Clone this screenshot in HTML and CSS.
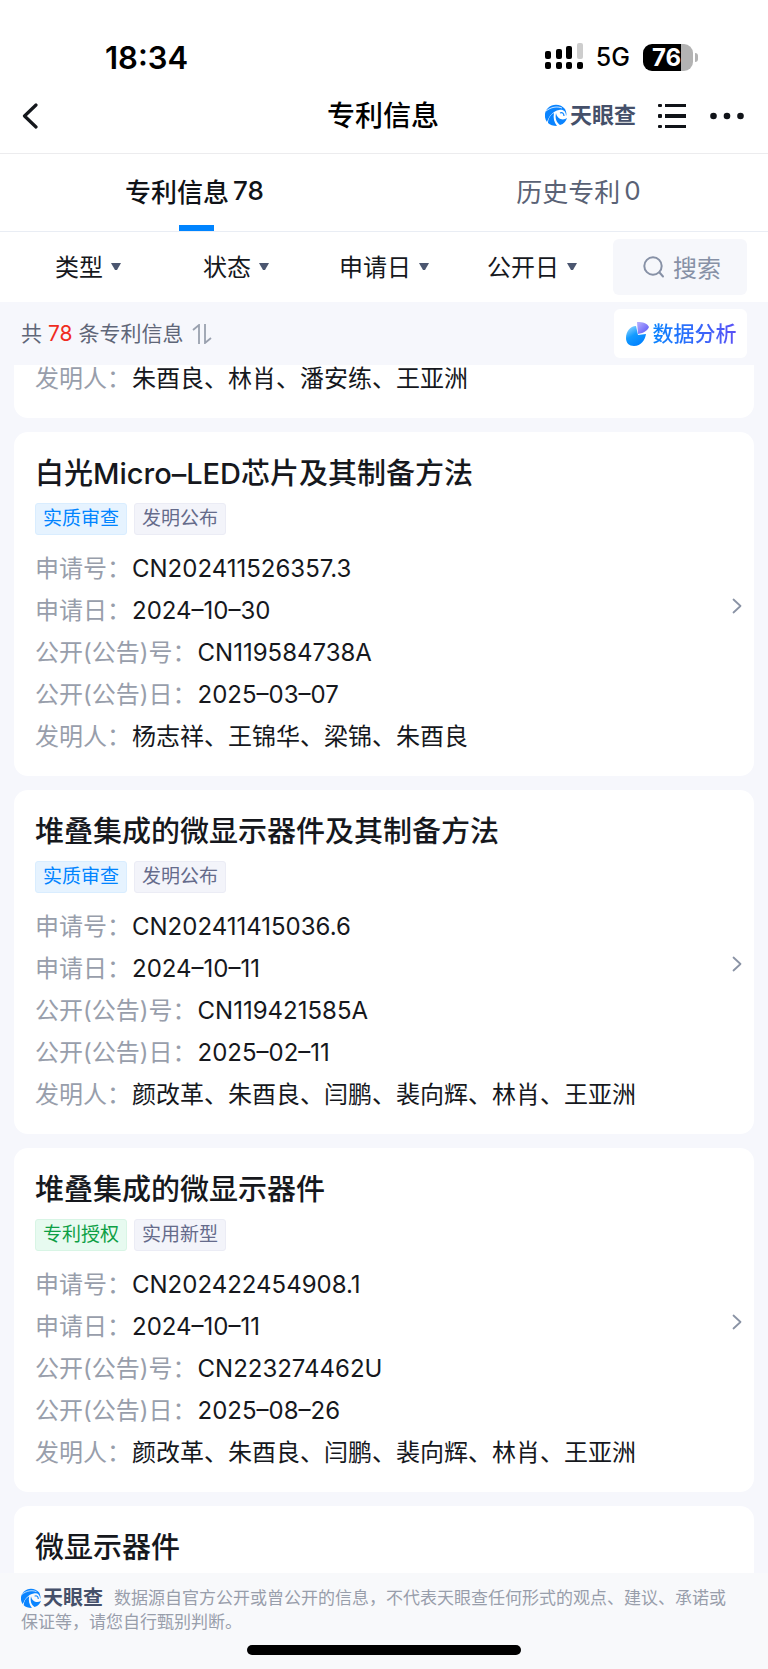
FILE: index.html
```html
<!DOCTYPE html>
<html lang="zh-CN">
<head>
    <meta charset="UTF-8">
    <meta name="viewport" content="width=device-width, initial-scale=1.0">
    <title>专利信息</title>
    <link rel="stylesheet" href="styles.css">
</head>
<body>
    <!-- shared icons -->
    <svg class="sprite" aria-hidden="true">
        <symbol id="swirl" viewBox="0 0 22 22">
            <path d="M20 5C16 0 8-1 3 4c-4 4-4 10-1 14C4 12 8 7 14 6c4-1 7 1 7 6 1-2 0-5-1-7z" fill="#0a84ff"/>
            <path d="M1 7C6 3 12 2 17 4" fill="none" stroke="#fff" stroke-width="0.8"/>
            <path d="M9 9c-4 2-6 6-6 10 2 2 5 3 9 3-3-4-4-8-3-13z" fill="#0a84ff"/>
            <path d="M11 9c-1 5 0 9 4 12 4-1 6-4 7-7-4 3-10 1-11-5z" fill="#0a84ff"/>
            <path d="M15 9c2-1 4 0 4 3" fill="none" stroke="#0a84ff" stroke-width="1.2"/>
        </symbol>
        <symbol id="chevron" viewBox="0 0 10 16">
            <path d="M1.5 1.5L8.5 8l-7 6.5" fill="none" stroke="#8a93a5" stroke-width="1.8" stroke-linecap="round" stroke-linejoin="round"/>
        </symbol>
    </svg>

    <header>
        <div class="status-bar">
            <span class="time">18:34</span>
            <div class="status-icons">
                <svg class="signal" width="38" height="28" viewBox="0 0 38 28">
                    <rect x="0" y="8" width="6" height="8" rx="2"/>
                    <rect x="11" y="6" width="6" height="10" rx="2"/>
                    <rect x="21" y="3" width="6" height="13" rx="2"/>
                    <rect x="32" y="0" width="6" height="16" rx="2" fill="#cdcdcd"/>
                    <rect x="0" y="19" width="6" height="7" rx="2"/>
                    <rect x="11" y="19" width="6" height="7" rx="2"/>
                    <rect x="21" y="19" width="6" height="7" rx="2"/>
                    <rect x="32" y="19" width="6" height="7" rx="2"/>
                </svg>
                <span class="network">5G</span>
                <span class="battery">76</span>
            </div>
        </div>

        <div class="nav">
            <button class="icon-button back" aria-label="返回">
                <svg width="16" height="26" viewBox="0 0 16 26">
                    <path d="M14 2L2.500 13 14 24" fill="none" stroke="#14171c" stroke-width="3.200" stroke-linecap="round" stroke-linejoin="round"/>
                </svg>
            </button>
            <h1>专利信息</h1>
            <div class="nav-right">
                <a href="#" class="brand"><svg width="22" height="22"><use href="#swirl"/></svg>天眼查</a>
                <button class="icon-button" aria-label="列表">
                    <svg width="28" height="26" viewBox="0 0 28 26" fill="#101318">
                        <rect x="0" y="1" width="4" height="3" rx="1"/>
                        <rect x="7" y="1" width="21" height="3"/>
                        <rect x="0" y="11" width="4" height="4" rx="1"/>
                        <rect x="7" y="11" width="21" height="4"/>
                        <rect x="0" y="22" width="4" height="3" rx="1"/>
                        <rect x="7" y="22" width="21" height="3"/>
                    </svg>
                </button>
                <button class="icon-button" aria-label="更多">
                    <svg width="34" height="8" viewBox="0 0 34 8" fill="#101318">
                        <circle cx="3.500" cy="4" r="3.300"/>
                        <circle cx="17" cy="4" r="3.300"/>
                        <circle cx="30.500" cy="4" r="3.300"/>
                    </svg>
                </button>
            </div>
        </div>

        <nav class="tabs">
            <a href="#" class="tab active">专利信息<span>78</span></a>
            <a href="#" class="tab">历史专利<span>0</span></a>
        </nav>

        <div class="filters">
            <button class="filter">类型<i class="arrow"></i></button>
            <button class="filter">状态<i class="arrow"></i></button>
            <button class="filter">申请日<i class="arrow"></i></button>
            <button class="filter">公开日<i class="arrow"></i></button>
            <button class="search">
                <svg width="22" height="22" viewBox="0 0 22 22" fill="none" stroke="#8791a6" stroke-width="2" stroke-linecap="round">
                    <circle cx="10" cy="10" r="8.700"/>
                    <path d="M16.500 16.500L20 20.500"/>
                </svg>
                <span>搜索</span>
            </button>
        </div>
    </header>

    <div class="summary">
        <p>共 <b>78</b> 条专利信息</p>
        <button class="icon-button sort" aria-label="排序">
            <svg width="20" height="20" viewBox="0 0 20 20" fill="none" stroke="#9aa1af" stroke-width="1.800">
                <path d="M1 6l6-5v19"/>
                <path d="M13 0v19l6-5"/>
            </svg>
        </button>
        <button class="analysis">
            <svg width="24" height="24" viewBox="0 0 24 24">
                <defs>
                    <linearGradient id="pie" x1="0" y1="0" x2="0.600" y2="1">
                        <stop offset="0" stop-color="#a6e0ff"/>
                        <stop offset="0.500" stop-color="#149bff"/>
                        <stop offset="1" stop-color="#0080ff"/>
                    </linearGradient>
                    <linearGradient id="slice" x1="0" y1="0" x2="1" y2="1">
                        <stop offset="0" stop-color="#b9b2ff"/>
                        <stop offset="1" stop-color="#5550f5"/>
                    </linearGradient>
                </defs>
                <path d="M11 4C5 4 1 10 1 16c0 5 3 8 8 8 7 0 11-6 12-12l-8 1z" fill="url(#pie)"/>
                <path d="M12 0c6 0 10 1 12 5-1 3-5 6-11 7z" fill="url(#slice)"/>
            </svg>
            <span>数据分析</span>
        </button>
    </div>

    <main>
        <article class="card card-scrolled">
            <div class="card-body">
                <dl>
                    <div><dt>发明人：</dt><dd>朱酉良、林肖、潘安练、王亚洲</dd></div>
                </dl>
            </div>
        </article>

        <article class="card">
            <div class="card-body">
                <h2>白光Micro–LED芯片及其制备方法</h2>
                <div class="tags">
                    <span class="tag blue">实质审查</span>
                    <span class="tag">发明公布</span>
                </div>
                <dl>
                    <div><dt>申请号：</dt><dd>CN202411526357.3</dd></div>
                    <div><dt>申请日：</dt><dd>2024–10–30</dd></div>
                    <div><dt>公开(公告)号：</dt><dd>CN119584738A</dd></div>
                    <div><dt>公开(公告)日：</dt><dd>2025–03–07</dd></div>
                    <div><dt>发明人：</dt><dd>杨志祥、王锦华、梁锦、朱酉良</dd></div>
                </dl>
            </div>
            <svg width="10" height="16"><use href="#chevron"/></svg>
        </article>

        <article class="card">
            <div class="card-body">
                <h2>堆叠集成的微显示器件及其制备方法</h2>
                <div class="tags">
                    <span class="tag blue">实质审查</span>
                    <span class="tag">发明公布</span>
                </div>
                <dl>
                    <div><dt>申请号：</dt><dd>CN202411415036.6</dd></div>
                    <div><dt>申请日：</dt><dd>2024–10–11</dd></div>
                    <div><dt>公开(公告)号：</dt><dd>CN119421585A</dd></div>
                    <div><dt>公开(公告)日：</dt><dd>2025–02–11</dd></div>
                    <div><dt>发明人：</dt><dd>颜改革、朱酉良、闫鹏、裴向辉、林肖、王亚洲</dd></div>
                </dl>
            </div>
            <svg width="10" height="16"><use href="#chevron"/></svg>
        </article>

        <article class="card">
            <div class="card-body">
                <h2>堆叠集成的微显示器件</h2>
                <div class="tags">
                    <span class="tag green">专利授权</span>
                    <span class="tag">实用新型</span>
                </div>
                <dl>
                    <div><dt>申请号：</dt><dd>CN202422454908.1</dd></div>
                    <div><dt>申请日：</dt><dd>2024–10–11</dd></div>
                    <div><dt>公开(公告)号：</dt><dd>CN223274462U</dd></div>
                    <div><dt>公开(公告)日：</dt><dd>2025–08–26</dd></div>
                    <div><dt>发明人：</dt><dd>颜改革、朱酉良、闫鹏、裴向辉、林肖、王亚洲</dd></div>
                </dl>
            </div>
            <svg width="10" height="16"><use href="#chevron"/></svg>
        </article>

        <article class="card card-last">
            <div class="card-body">
                <h2>微显示器件</h2>
            </div>
        </article>
    </main>

    <footer>
        <p><span class="brand"><svg width="20" height="20"><use href="#swirl"/></svg>天眼查</span>数据源自官方公开或曾公开的信息，不代表天眼查任何形式的观点、建议、承诺或保证等，请您自行甄别判断。</p>
        <div class="home-bar"></div>
    </footer>
</body>
</html>
```
FILE: styles.css
```css
* {
    box-sizing: border-box;
    margin: 0;
    padding: 0;
}

body {
    font-family: Inter, "Noto Sans CJK SC", sans-serif;
    font-size: 24px;
    color: #16181d;
    background: #f6f7fc;
}

button {
    border: none;
    background: none;
    font: inherit;
    color: inherit;
    cursor: pointer;
}

a {
    color: inherit;
    text-decoration: none;
}

svg {
    display: block;
    flex: none;
}

.sprite {
    position: absolute;
    width: 0;
    height: 0;
}

header {
    background: #fff;
}

.icon-button {
    display: flex;
    align-items: center;
}

/* status bar */
.status-bar {
    display: flex;
    justify-content: space-between;
    align-items: center;
    height: 78px;
    padding: 36px 75px 0 105px;
    color: #000;
}

.time {
    font-size: 31px;
    font-weight: 600;
}

.status-icons {
    display: flex;
    align-items: center;
    gap: 13px;
}

.network {
    font-size: 25px;
    font-weight: 500;
}

.battery {
    position: relative;
    width: 50px;
    height: 27px;
    padding-right: 3px;
    border-radius: 9px;
    background: linear-gradient(to right, #000 76%, #b3b3b3 76%);
    color: #fff;
    font-size: 24px;
    font-weight: 700;
    line-height: 27px;
    text-align: center;
}

.battery::after {
    content: "";
    position: absolute;
    top: 9px;
    right: -5px;
    width: 3px;
    height: 9px;
    border-radius: 0 3px 3px 0;
    background: #b3b3b3;
}

/* title bar */
.nav {
    display: grid;
    grid-template-columns: 1fr auto 1fr;
    align-items: center;
    height: 76px;
    padding: 0 24px 0 22px;
    border-bottom: 1px solid #ececee;
}

.nav h1 {
    font-size: 28px;
    font-weight: 500;
    line-height: 40px;
    color: #000;
}

.nav-right {
    display: flex;
    justify-content: flex-end;
    align-items: center;
    gap: 24px;
}

.brand {
    display: inline-flex;
    align-items: center;
    gap: 3px;
    font-size: 22px;
    font-weight: 700;
    line-height: 24px;
    color: #45506a;
}

.nav-right .brand {
    margin-right: -2px;
    padding-bottom: 2px;
}

/* tabs */
.tabs {
    display: flex;
    height: 78px;
    border-bottom: 1px solid #e9edf4;
}

.tab {
    position: relative;
    flex: 1;
    display: flex;
    justify-content: center;
    align-items: center;
    gap: 4px;
    padding: 0 0 4px 5px;
    font-size: 26px;
    color: #5a6275;
}

.tab.active {
    color: #101318;
    font-weight: 500;
}

.tab.active::after {
    content: "";
    position: absolute;
    bottom: 0;
    left: 50%;
    width: 35px;
    margin-left: -13px;
    height: 6px;
    background: #0084ff;
}

/* filters */
.filters {
    display: flex;
    align-items: center;
    height: 70px;
    padding: 0 21px 0 14px;
}

.filter {
    display: flex;
    flex: 1;
    justify-content: center;
    align-items: center;
    gap: 8px;
    padding-bottom: 3px;
}

.arrow {
    width: 10px;
    height: 7px;
    margin-top: 2px;
    background: #4b5670;
    clip-path: polygon(0 0, 100% 0, 60% 100%, 40% 100%);
}

.search {
    display: flex;
    justify-content: center;
    align-items: center;
    gap: 8px;
    width: 134px;
    height: 56px;
    margin-left: 7px;
    padding-left: 4px;
    border-radius: 6px;
    background: #f6f7fb;
    color: #8791a6;
}

.search span {
    padding-bottom: 2px;
}

/* result count */
.summary {
    display: flex;
    align-items: center;
    height: 63px;
    padding: 0 21px;
    font-size: 21px;
    color: #5f6678;
}

.summary p,
.analysis span {
    padding-bottom: 3px;
}

.summary b {
    font-weight: 400;
    color: #f02c1f;
}

.sort {
    margin-left: 9px;
}

.analysis {
    display: flex;
    justify-content: center;
    align-items: center;
    gap: 4px;
    width: 133px;
    height: 49px;
    margin-left: auto;
    border-radius: 6px;
    background: #fff;
}

.analysis span {
    background: linear-gradient(to right, #0a84ff, #5b50f6);
    -webkit-background-clip: text;
    background-clip: text;
    color: transparent;
    font-weight: 500;
}

/* patent list */
main {
    display: flex;
    flex-direction: column;
    gap: 14px;
    padding: 0 14px;
    overflow: hidden;
}

.card {
    display: flex;
    align-items: center;
    padding: 22px 12px 18px 21px;
    border-radius: 14px;
    background: #fff;
}

.card-body {
    flex: 1;
}

/* list is scrolled a little under the count bar */
.card-scrolled {
    margin-top: -7px;
    padding-top: 0;
    border-radius: 0 0 14px 14px;
}

.card-last {
    padding-bottom: 5px;
    border-radius: 14px 14px 0 0;
}

.card h2 {
    font-size: 29px;
    font-weight: 500;
    line-height: 40px;
    color: #16181d;
}

.tags {
    display: flex;
    gap: 7px;
    margin: 9px 0 13px;
}

.tag {
    padding: 0 7px;
    border: 1px solid #ebecf5;
    border-radius: 3px;
    background: #f3f4fa;
    color: #656b8b;
    font-size: 19px;
    line-height: 30px;
}

.tag.blue {
    border-color: #d9edff;
    background: #e6f3ff;
    color: #0084ff;
}

.tag.green {
    border-color: #d8f5e5;
    background: #e7faf0;
    color: #0d9f45;
}

.card dl div {
    display: flex;
    gap: 1px;
    line-height: 42px;
}

.card dt {
    color: #989eab;
}

/* disclaimer */
footer {
    padding: 13px 21px 14px;
    background: #f8f9fb;
    color: #989eab;
    font-size: 17px;
    line-height: 24px;
}

footer p {
    padding-right: 14px;
}

footer .brand {
    margin-right: 11px;
    gap: 2px;
    font-size: 20px;
    vertical-align: top;
}

.home-bar {
    width: 274px;
    height: 10px;
    margin: 11px auto 0;
    border-radius: 5px;
    background: #000;
}
```
